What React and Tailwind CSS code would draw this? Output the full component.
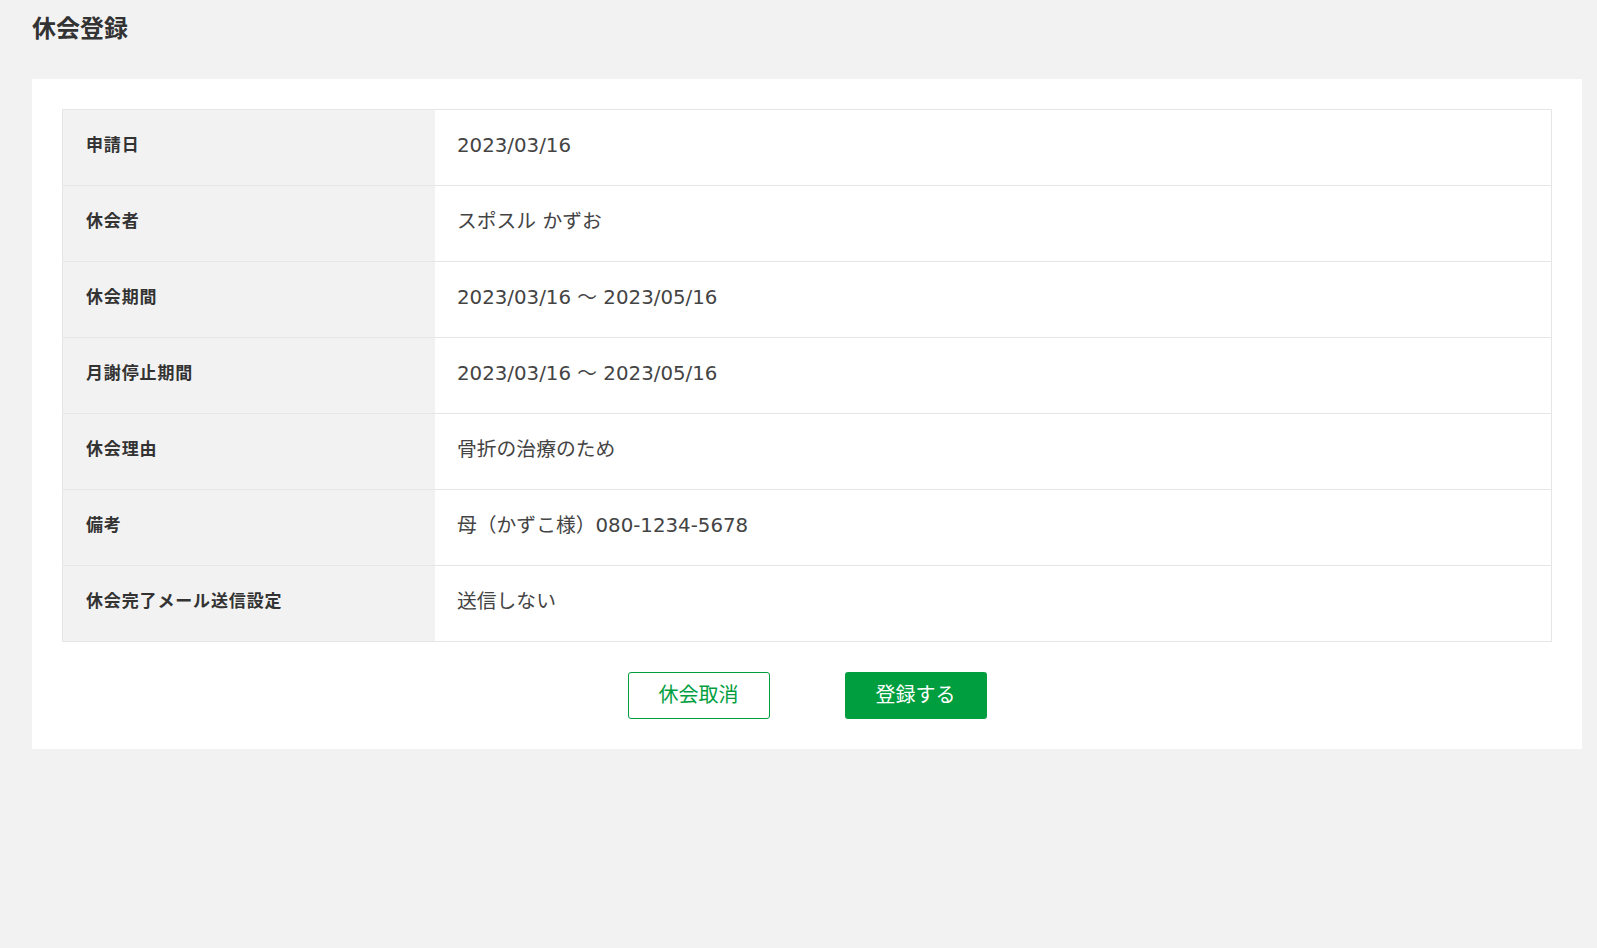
import React from "react";

const rows = [
  { label: "申請日", value: "2023/03/16" },
  { label: "休会者", value: "スポスル かずお" },
  { label: "休会期間", value: "2023/03/16 〜 2023/05/16" },
  { label: "月謝停止期間", value: "2023/03/16 〜 2023/05/16" },
  { label: "休会理由", value: "骨折の治療のため" },
  { label: "備考", value: "母（かずこ様）080-1234-5678" },
  { label: "休会完了メール送信設定", value: "送信しない" },
];

export default function App() {
  return (
    <div
      className="min-h-[948px] bg-[#f2f2f2] pl-[32px] pr-[15px] text-[#333]"
      style={{ fontFamily: '"DejaVu Sans", "Noto Sans CJK JP", sans-serif' }}>
      {/* Page title */}
      <div className="h-[57px] flex items-center">
        <h1 className="text-[24px] font-bold leading-none text-[#333]">休会登録</h1>
      </div>

      {/* Card */}
      <div className="mt-[22px] bg-white p-[30px]">
        <div className="border border-[#e6e6e6] border-t-0">
          {rows.map(row => (
            <div key={row.label} className="flex h-[76px] border-t border-[#e6e6e6]">
              <div className="w-[372px] shrink-0 bg-[#f2f2f2] flex items-center pl-[23px] pb-[4px]">
                <span className="text-[17px] leading-none font-bold tracking-[0.05em] text-[#333]">{row.label}</span>
              </div>
              <div className="flex-1 flex items-center pl-[22px] pb-[4px]">
                <span className="text-[19.8px] leading-none text-[#444]">{row.value}</span>
              </div>
            </div>
          ))}
        </div>

        {/* Actions */}
        <div className="flex justify-center gap-[75px] mt-[30px]">
          <button className="w-[142px] h-[47px] rounded-[3px] border border-[#009e3e] bg-white text-[#009e3e] text-[20px] leading-none flex items-center justify-center pb-[2px]">
            休会取消
          </button>
          <button className="w-[142px] h-[47px] rounded-[3px] bg-[#009e3e] text-white text-[20px] leading-none flex items-center justify-center pb-[2px]">
            登録する
          </button>
        </div>
      </div>
    </div>
  );
}
